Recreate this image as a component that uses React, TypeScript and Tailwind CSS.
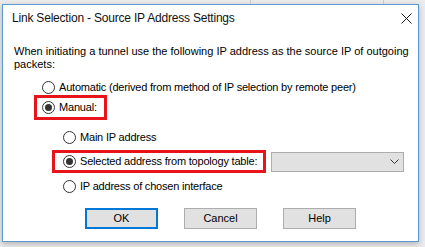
import React from 'react';

const font = { fontFamily: '"Liberation Sans", Arial, sans-serif' };

function Radio({ checked }: { checked?: boolean }) {
  return (
    <span className="flex h-[13px] w-[13px] shrink-0 items-center justify-center rounded-full border border-[#333333] bg-white">
      {checked && <span className="h-[7px] w-[7px] rounded-full bg-[#333333]" />}
    </span>
  );
}

function Option({ label, checked }: { label: string; checked?: boolean }) {
  return (
    <div className="flex items-center gap-[4px]">
      <Radio checked={checked} />
      <span className="whitespace-nowrap tracking-[-0.2px]">{label}</span>
    </div>
  );
}

function Button({ label, primary }: { label: string; primary?: boolean }) {
  return (
    <button
      className={
        primary
          ? 'flex h-[21px] w-[73px] items-center justify-center border-2 border-[#0078d7] bg-[#e1e1e1] text-[11px] text-black'
          : 'flex h-[21px] w-[73px] items-center justify-center border border-[#adadad] bg-[#e1e1e1] text-[11px] text-black'
      }
    >
      {label}
    </button>
  );
}

export default function App() {
  return (
    <div className="h-[247px] w-[425px] overflow-hidden bg-[#ececec] text-[11px] text-black" style={font}>
      <div className="flex h-[4px]">
        <div className="ml-[250px] h-full w-px bg-[#c8c8c8]" />
        <div className="ml-[132px] h-full w-px bg-[#c8c8c8]" />
      </div>
      <div className="ml-[2px] flex h-[238px] w-[417px] flex-col border border-[#5b9bd5] bg-white shadow-[0_2px_6px_rgba(0,0,0,0.25)]">
        <div className="flex h-[26px] shrink-0 items-center justify-between pl-[9px] pr-[5px]">
          <span className="text-[12px] tracking-[-0.2px] text-[#111111]">Link Selection - Source IP Address Settings</span>
          <svg width="11" height="11" viewBox="0 0 11 11" className="mr-[1px]">
            <path d="M0.5 0.5 L10.5 10.5 M10.5 0.5 L0.5 10.5" stroke="#1a1a1a" strokeWidth="1" fill="none" />
          </svg>
        </div>

        <p className="ml-[11px] mt-[14px] whitespace-nowrap leading-[13px]">
          When initiating a tunnel use the following IP address as the source IP of outgoing
          <br />
          packets:
        </p>

        <div className="ml-[39px] mt-[8px] flex h-[16px] items-center">
          <Option label="Automatic (derived from method of IP selection by remote peer)" />
        </div>

        <div className="ml-[31px] flex h-[25px] w-[73px] items-center border-[3px] border-[#e8141c] pl-[5px]">
          <Option label="Manual:" checked />
        </div>

        <div className="ml-[60px] mt-[9px] flex h-[16px] items-center">
          <Option label="Main IP address" />
        </div>

        <div className="ml-[49px] mt-[5px] flex items-center">
          <div className="flex h-[23px] w-[214px] items-center border-[3px] border-[#e8141c] pl-[8px]">
            <Option label="Selected address from topology table:" checked />
          </div>
          <div className="ml-[5px] flex h-[20px] w-[133px] items-center justify-end border border-[#adadad] bg-[#e1e1e1] pr-[4px]">
            <svg width="9" height="6" viewBox="0 0 9 6">
              <path d="M0.5 0.5 L4.5 4.5 L8.5 0.5" stroke="#333333" strokeWidth="1" fill="none" />
            </svg>
          </div>
        </div>

        <div className="ml-[60px] mt-[5px] flex h-[16px] items-center">
          <Option label="IP address of chosen interface" />
        </div>

        <div className="ml-[82px] mt-[14px] flex gap-[26px]">
          <Button label="OK" primary />
          <Button label="Cancel" />
          <Button label="Help" />
        </div>
      </div>
    </div>
  );
}
